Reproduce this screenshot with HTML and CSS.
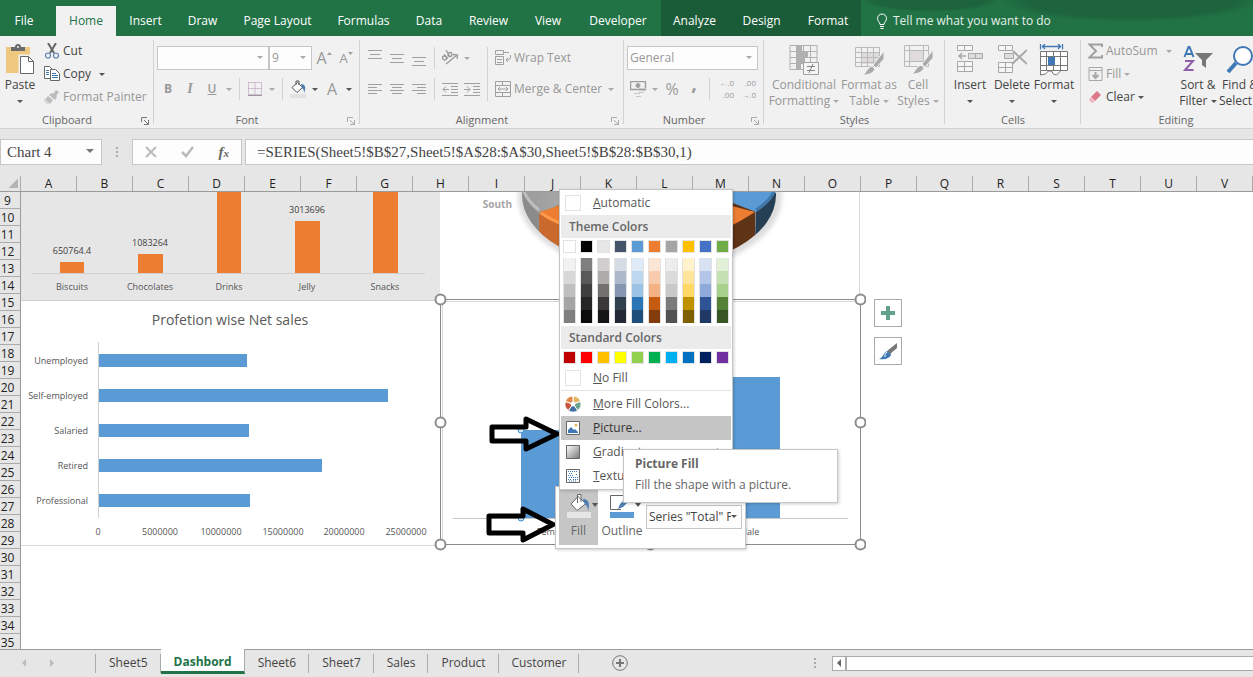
FILE: index.html
```html
<!DOCTYPE html>
<html lang="en">
<head>
<meta charset="utf-8">
<title>Dashbord - Excel</title>
<link rel="stylesheet" href="styles.css">
</head>
<body>
<div class="app">
<nav class="tabs" aria-label="Ribbon tabs">
  <button class="file">File</button><button class="active">Home</button><button>Insert</button><button>Draw</button><button>Page Layout</button><button>Formulas</button><button>Data</button><button>Review</button><button>View</button><button>Developer</button><button class="ctx">Analyze</button><button class="ctx">Design</button><button class="ctx">Format</button>
  <button class="tell"><svg width="12" height="17" viewBox="0 0 12 17" fill="none" stroke="#fff"><path d="M4 11.500C4 9 1.500 8.500 1.500 5.500a4.500 4.500 0 0 1 9 0C10.500 8.500 8 9 8 11.500zM4 13.500h4M4.500 15.500h3"/></svg>Tell me what you want to do</button>
</nav>

<div class="ribbon">
  <section class="group clipboard">
    <div class="tools">
      <button class="big"><svg width="30" height="32" viewBox="0 0 30 32"><path fill="#edc87e" d="M1 3h24v26H1z"/><path fill="#6a6a6a" d="M6 7V3h4a3 3 0 0 1 6 0h4v4z"/><circle cx="13" cy="3" r="1" fill="#f1f1f1"/><path fill="#fff" stroke="#f1f1f1" stroke-width="3" d="M15 12h9l5 5v13H15z"/><path fill="#fff" stroke="#666" d="M15.500 12.500h8l5 5v12h-13zM23.500 12.500v5h5"/></svg><span>Paste</span><i class="caret"></i></button>
      <div class="stack">
        <button><svg width="16" height="16" viewBox="0 0 16 16" fill="none"><path stroke="#666" stroke-width="2" d="M4 0l6 10M12 0L6 10"/><circle cx="4" cy="12.500" r="2.500" stroke="#5b83b3" stroke-width="1.200"/><circle cx="12" cy="12.500" r="2.500" stroke="#5b83b3" stroke-width="1.200"/></svg>Cut</button>
        <button><svg width="16" height="16" viewBox="0 0 16 16" fill="#fff" stroke="#666"><path d="M.5.500h5l3 3v9h-8z"/><path stroke="#4479ae" d="M2 4.500h3M2 6.500h3M2 8.500h3"/><path d="M6.500 3.500h5l4 4v7h-9z"/><path stroke="#4479ae" d="M8 7.500h4M8 9.500h6M8 11.500h6"/></svg>Copy<i class="caret gap"></i></button>
        <button disabled><svg width="16" height="16" viewBox="0 0 16 16" fill="#bdbdbd"><path d="M12 1l3 2-3 4 1 1-2 3-6-5 3-2 1 1zM4 7l5 4-3 4-5-4z"/><path fill="#d9d9d9" d="M0 9l5 5-1 2-4-4z"/></svg>Format Painter</button>
      </div>
    </div>
    <footer>Clipboard<button class="launch" aria-label="Clipboard options"><svg width="8" height="8" viewBox="0 0 8 8" fill="none" stroke="#777"><path d="M.5 5V.5H6M3 3l4 4M7.500 3v4.500H3"/></svg></button></footer>
  </section>

  <section class="group font">
    <div class="tools rows">
      <div class="row">
        <span class="combo face"><select disabled aria-label="Font"><option></option></select></span><span class="combo size"><select disabled aria-label="Font size"><option>9</option></select></span>
        <button class="cell" disabled aria-label="Increase font size"><span class="l16">A</span><svg width="5" height="12" viewBox="0 0 5 12"><path fill="#a0a0a0" d="M0 3l2.500-3L5 3z"/></svg></button><button class="cell" disabled aria-label="Decrease font size"><span class="l13">A</span><svg width="5" height="12" viewBox="0 0 5 12"><path fill="#a0a0a0" d="M0 0h5L2.500 3z"/></svg></button>
      </div>
      <div class="row">
        <button class="cell" disabled><b>B</b></button><button class="cell" disabled><em class="italic">I</em></button><button class="cell" disabled><u class="under">U</u></button><i class="caret off"></i><i class="vr"></i>
        <button class="cell" disabled aria-label="Borders"><svg width="14" height="14" viewBox="0 0 14 14" fill="none" stroke="#b58fb8" stroke-dasharray="1 1"><path d="M.5.5h13v12H.5zM7 .5v12M.5 6.500h13"/><path stroke="#999" stroke-dasharray="none" d="M0 13.500h14"/></svg></button><i class="caret off"></i><i class="vr"></i>
        <button class="cell" aria-label="Fill color"><svg width="17" height="18" viewBox="0 0 17 18"><path fill="#e2e2e2" d="M0 14h16v4H0z"/><path fill="#fff" stroke="#555" d="M7.500 2.500l5 5-5.500 5-5-5zM6 5V1h3v4"/><path fill="#4d7cae" d="M11 4c5 0 5 5 3 9 0-4-1-4-2-5z"/></svg></button><i class="caret"></i>
        <button class="cell" disabled aria-label="Font color"><span class="l16">A</span></button><i class="caret"></i>
      </div>
    </div>
    <footer>Font<button class="launch off" aria-label="Font options"><svg width="8" height="8" viewBox="0 0 8 8" fill="none" stroke="#aaa"><path d="M.5 5V.5H6M3 3l4 4M7.500 3v4.500H3"/></svg></button></footer>
  </section>

  <section class="group align">
    <div class="tools">
      <div class="rows">
        <div class="row">
          <button class="cell" disabled aria-label="Top align"><svg class="ln" width="14" height="16"><path d="M0 .5h14M2 4.500h10M0 8.500h14"/></svg></button><button class="cell" disabled aria-label="Middle align"><svg class="ln" width="14" height="16"><path d="M0 4.500h14M2 8.500h10M0 12.500h14"/></svg></button><button class="cell" disabled aria-label="Bottom align"><svg class="ln" width="14" height="16"><path d="M0 7.500h14M2 11.500h10M0 15.500h14"/></svg></button><i class="vr"></i>
          <button class="cell" disabled aria-label="Orientation"><svg width="18" height="16" viewBox="0 0 18 16" fill="none" stroke="#999" stroke-width="1.300"><path d="M5 14L16 5M12 4.500l4.500.5-.5 4"/><circle cx="3.500" cy="8" r="2"/><path d="M3 4.500l4 4"/><circle cx="9" cy="4.500" r="2"/><path d="M5 0l3.500 6"/></svg></button><i class="caret off"></i>
        </div>
        <div class="row">
          <button class="cell" disabled aria-label="Align left"><svg class="ln" width="14" height="11"><path d="M0 .5h14M0 3.500h9M0 6.500h14M0 9.500h9"/></svg></button><button class="cell" disabled aria-label="Center"><svg class="ln" width="14" height="11"><path d="M0 .5h14M2 3.500h10M0 6.500h14M2 9.500h10"/></svg></button><button class="cell" disabled aria-label="Align right"><svg class="ln" width="14" height="11"><path d="M0 .5h14M5 3.500h9M0 6.500h14M5 9.500h9"/></svg></button><i class="vr"></i>
          <button class="cell" disabled aria-label="Decrease indent"><svg class="ln" width="16" height="13"><path d="M0 .5h16M9 3.500h7M9 6.500h7M9 9.500h7M0 12.500h16M1 6.500h6M4 3.500l-3 3 3 3"/></svg></button><button class="cell" disabled aria-label="Increase indent"><svg class="ln" width="16" height="13"><path d="M0 .5h16M9 3.500h7M9 6.500h7M9 9.500h7M0 12.500h16M0 6.500h6M3 3.500l3 3-3 3"/></svg></button>
        </div>
      </div>
      <i class="vr tall"></i>
      <div class="rows">
        <button class="row wide" disabled><svg class="ln" width="16" height="16"><path d="M.5.5h8v4h-8zM9 2.500h5M.5 6.500h8v8h-8zM2 9.500h5M2 12.500h5M15.500 5v3q0 2-4 2M13 7.500l-2 2.500 2 2"/></svg>Wrap Text</button>
        <button class="row wide" disabled><svg class="ln" width="16" height="16"><path d="M.5.500h15v15H.500zM0 4.500h16M0 11.500h16M7.500 0v4M7.500 12v4M3 8h10M5 6L3 8l2 2M11 6l2 2-2 2"/></svg>Merge &amp; Center<i class="caret off gap"></i></button>
      </div>
    </div>
    <footer>Alignment<button class="launch off" aria-label="Alignment options"><svg width="8" height="8" viewBox="0 0 8 8" fill="none" stroke="#aaa"><path d="M.5 5V.5H6M3 3l4 4M7.500 3v4.500H3"/></svg></button></footer>
  </section>

  <section class="group number">
    <div class="tools rows">
      <div class="row"><span class="combo format"><select disabled aria-label="Number format"><option>General</option></select></span></div>
      <div class="row">
        <button class="cell" disabled aria-label="Accounting format"><svg width="17" height="16" viewBox="0 0 17 16" fill="none" stroke="#a0a0a0"><path d="M.5.5h15v8H.5z" stroke-width="1.500"/><circle cx="8" cy="4.500" r="2" fill="#a0a0a0"/><path stroke="#c8c8c8" d="M9 7.500h7M9 9.500h7M9 11.500h5M4 12.500h6M6 15.500h5"/></svg></button><i class="caret off"></i>
        <button class="cell l16" disabled>%</button><button class="cell comma" disabled>,</button><i class="vr"></i>
        <button class="cell dec" disabled><span>←.0</span><span>.00</span></button><button class="cell dec" disabled><span>.00</span><span>→.0</span></button>
      </div>
    </div>
    <footer>Number<button class="launch off" aria-label="Number options"><svg width="8" height="8" viewBox="0 0 8 8" fill="none" stroke="#aaa"><path d="M.5 5V.5H6M3 3l4 4M7.500 3v4.500H3"/></svg></button></footer>
  </section>

  <section class="group styles">
    <div class="tools">
      <button class="big" disabled><svg width="30" height="32" viewBox="0 0 30 32" fill="none" stroke="#aaa"><path d="M1 1.500h27v24H1zM1 7.500h27M1 13.500h27M1 19.500h27M7.500 1v24M14.500 1v24M21.500 1v24"/><path fill="#aaa" stroke="none" d="M8 2h5v5H8zM8 8h11v5H8zM8 14h8v5H8zM8 20h4v5H8z"/><path fill="#f6f6f6" stroke="#999" d="M14.500 18.500h15v12h-15z"/><path stroke="#777" d="M18 22.500h8M18 26.500h8M24 20l-4 9"/></svg><span>Conditional<br>Formatting <i class="caret off"></i></span></button>
      <button class="big" disabled><svg width="30" height="32" viewBox="0 0 30 32" fill="none" stroke="#b5b5b5"><path fill="#dcd8dc" stroke="none" d="M8 9h17v11H8z"/><path d="M1.500 3.500h24v19h-24zM1 8.500h25M1 13.500h25M1 18.500h25M7.500 3v20M13.500 3v20M19.500 3v20"/><path fill="#a3a3a3" stroke="#f1f1f1" d="M30 7v8l-8 9-3-3zM18 22l3 3c-2 5-8 6-12 6 3-2 4-7 9-9z"/></svg><span>Format as<br>Table <i class="caret off"></i></span></button>
      <button class="big" disabled><svg width="30" height="32" viewBox="0 0 30 32" fill="none" stroke="#b5b5b5"><path fill="#dcd8dc" stroke="none" d="M6 7h15v10H6z"/><path d="M1.500 1.500h24v21h-24zM1 6.500h25M1 17.500h25M6.500 1v22M20.500 1v22"/><path fill="#a3a3a3" stroke="#f1f1f1" d="M30 6v8l-8 9-3-3zM18 21l3 3c-2 5-8 6-12 6 3-2 4-7 9-9z"/></svg><span>Cell<br>Styles <i class="caret off"></i></span></button>
    </div>
    <footer>Styles</footer>
  </section>

  <section class="group cells">
    <div class="tools">
      <button class="big"><svg width="30" height="32" viewBox="0 0 30 32" fill="#f6f6f6" stroke="#a8a8a8"><path d="M2.500 1.500h15v5h-15zM9.500 1.500v5M2.500 17.500h15v10h-15zM2.500 22.500h15M9.500 17.500v10"/><path fill="#ddd" d="M13.500 9.500h14v5h-14zM20.500 9.500v5"/><path fill="none" stroke-width="1.500" d="M4 12h7M7 9l-3 3 3 3"/></svg><span>Insert</span><i class="caret"></i></button>
      <button class="big"><svg width="30" height="32" viewBox="0 0 30 32" fill="#f6f6f6" stroke="#a8a8a8"><path d="M1.500 1.500h14v5h-14zM8.500 1.500v5M1.500 18.500h14v10h-14zM1.500 23.500h14M8.500 18.500v10"/><path fill="#ddd" d="M7.500 9.500h9v5h-9z"/><path stroke-width="2" d="M16 7l14 13M30 6L15 20"/></svg><span>Delete</span><i class="caret"></i></button>
      <button class="big"><svg width="30" height="32" viewBox="0 0 30 32" fill="#fff" stroke="#777"><path d="M1.500 7.500h27v19h-27zM1 12.500h28M1 21.500h28M7.500 7v19M21.500 7v19M14.500 7v5M14.500 22v5"/><path d="M1.500 27v4l5-1 3-3h3l2 3 3 1 4-4"/><path fill="#3f78b5" stroke="none" d="M9 13h7v8H9z"/><path fill="none" stroke="#3f78b5" stroke-width="1.300" d="M1.500 0v5.500M23.500 0v5.500M3 2.500h19M6 0L3.500 2.500 6 5M19 0l2.500 2.500L19 5"/></svg><span>Format</span><i class="caret"></i></button>
    </div>
    <footer>Cells</footer>
  </section>

  <section class="group editing">
    <div class="tools">
      <div class="stack">
        <button disabled><svg width="15" height="16" viewBox="0 0 15 16" fill="none" stroke="#a0a0a0" stroke-width="2"><path d="M14 4V1.500H1.500L8 8l-6.500 6.500H14V12"/></svg>AutoSum<i class="caret off gap"></i></button>
        <button disabled><svg width="15" height="16" viewBox="0 0 15 16" fill="none" stroke="#a8a8a8"><path d="M1 1.500h13v13H1zM1 4.500h13"/><path stroke-width="2" d="M7.500 6v6M4.500 9l3 3 3-3"/></svg>Fill<i class="caret off"></i></button>
        <button><svg width="15" height="16" viewBox="0 0 15 16"><path fill="#e0788b" d="M9 2l4 4-6 6-4-4z"/><path fill="#efb4bd" d="M2.500 8.500l4 4L4 14l-3-3z"/></svg>Clear<i class="caret"></i></button>
      </div>
      <button class="big sort"><svg width="30" height="32" viewBox="0 0 30 32" fill="none"><path stroke="#3f78b5" stroke-width="2" d="M1.500 13L5.500 3h1l4 10M3 10h6"/><path stroke="#8e5fa8" stroke-width="2" d="M2 17h8L2 26h8.500"/><path fill="#777" d="M12 9h18l-7 7v8l-4-3v-5z"/></svg><span>Sort &amp;<br>Filter <i class="caret"></i></span></button>
      <button class="big"><svg width="30" height="32" viewBox="0 0 30 32" fill="none" stroke="#3f78b5"><circle cx="18" cy="12" r="9" fill="#fff" stroke-width="2"/><path stroke-width="4" d="M11 19L3 28"/></svg><span>Find &amp;<br>Select <i class="caret"></i></span></button>
    </div>
    <footer>Editing</footer>
  </section>
</div>

<div class="formula-bar">
  <span class="combo name"><input value="Chart 4" aria-label="Name box"></span>
  <i class="dots"></i>
  <div class="fx"><button disabled aria-label="Cancel"><svg width="12" height="12" viewBox="0 0 12 12"><path fill="none" stroke="#bbb" stroke-width="2" d="M1 1l10 10M11 1L1 11"/></svg></button><button disabled aria-label="Enter"><svg width="13" height="12" viewBox="0 0 13 12"><path fill="none" stroke="#bbb" stroke-width="2.500" d="M1 6l4 4 7-9"/></svg></button><button aria-label="Insert function"><em>f<small>x</small></em></button></div>
  <input class="formula" aria-label="Formula" value="=SERIES(Sheet5!$B$27,Sheet5!$A$28:$A$30,Sheet5!$B$28:$B$30,1)">
</div>

<main class="sheet">
  <div class="cols" id="cols"><span class="corner"></span></div>
  <div class="body">
    <div class="rownums" id="rows"></div>
    <div class="canvas">
      <svg class="chart c1" width="419" height="110" viewBox="0 0 419 110">
        <rect width="419" height="109" fill="#e7e6e6"/><path d="M0 108.500h419" stroke="#d0d0d0"/>
        <path d="M11 81.500h393" stroke="#d0d0d0"/>
        <path fill="#ed7d31" d="M39 70h24v11H39zM117 62h25v19h-25zM196 0h24v81h-24zM274 29h25v52h-25zM352 0h25v81h-25z"/>
        <g class="val"><text x="51" y="62">650764.4</text><text x="129" y="54">1083264</text><text x="286" y="21">3013696</text></g>
        <g class="lab"><text x="51" y="98">Biscuits</text><text x="129" y="98">Chocolates</text><text x="208" y="98">Drinks</text><text x="286" y="98">Jelly</text><text x="364" y="98">Snacks</text></g>
      </svg>
      <svg class="chart c2" width="421" height="108" viewBox="0 0 421 108">
        <defs><clipPath id="disc"><ellipse cx="209" cy="3" rx="127" ry="73"/></clipPath>
        <linearGradient id="face"><stop stop-color="#9a9a9a"/><stop offset="1" stop-color="#b0b0b0"/></linearGradient>
        <filter id="soft"><feGaussianBlur stdDeviation="2"/></filter></defs>
        <ellipse cx="210" cy="5" rx="132" ry="76" fill="#dddddd" filter="url(#soft)"/>
        <g clip-path="url(#disc)">
          <path fill="#8b8b8b" d="M80 0h40v80H80z"/><path fill="#c9692b" d="M99 19l80-30v100h-79z"/><path fill="#5f3315" d="M209 0h107l-2 80H209z"/><path fill="#263f55" d="M316 17l24-20v80h-26z"/>
        </g>
        <path fill="url(#face)" d="M82 0h64l-46 22Q87 12 82 0z"/><path fill="none" stroke="#bebebe" stroke-width="3" d="M84 0q5 10 15 18"/>
        <path fill="#ed7d31" d="M99 20l40-12h130l46 12q-107 70-216 0z"/><path fill="none" stroke="#ff9a4a" stroke-width="3" d="M101 21q10 7 24 12"/>
        <path fill="#5b9bd5" d="M270-2h66q-4 12-20 22l-36-14z"/><path fill="none" stroke="#3f76a8" stroke-width="3" d="M334 0q-6 11-18 18"/>
        <text class="south" x="72" y="16">South</text><path d="M419.500 0v108" stroke="#d9d9d9"/>
      </svg>
      <svg class="chart c3" width="420" height="246" viewBox="0 0 420 246">
        <path d="M0 244.500h420" stroke="#d9d9d9"/>
        <text class="title" x="209" y="24">Profetion wise Net sales</text>
        <path d="M77.500 41v176" stroke="#d0d0d0"/>
        <path fill="#5b9bd5" d="M78 53h148v13H78zM78 88h289v13H78zM78 123h150v13H78zM78 158h223v13H78zM78 193h151v13H78z"/>
        <g class="lab end"><text x="67" y="63">Unemployed</text><text x="67" y="98">Self-employed</text><text x="67" y="133">Salaried</text><text x="67" y="168">Retired</text><text x="67" y="203">Professional</text></g>
        <g class="lab num"><text x="77" y="234">0</text><text x="139" y="234">5000000</text><text x="200" y="234">10000000</text><text x="262" y="234">15000000</text><text x="323" y="234">20000000</text><text x="385" y="234">25000000</text></g>
      </svg>
      <svg class="chart c4" width="432" height="258" viewBox="0 0 432 258" fill="none">
        <rect x="6.500" y="6.500" width="420" height="245" stroke="#8c8c8c" fill="#fff"/><path d="M7 8.500h419M8.500 7v244" stroke="#d9d9d9"/>
        <path fill="#5b9bd5" d="M87 137h62v88H87zM285 84h61v141h-61z"/><path d="M19 225.500h395" stroke="#c8c8c8"/>
        <g class="lab"><text x="118" y="242">Female</text><text x="315" y="242">Male</text></g>
        <g fill="#cfe6f8" stroke="#3b8ccb"><circle cx="87" cy="137" r="3"/><circle cx="87" cy="225" r="3"/></g>
        <g fill="#fff" stroke="#8c8c8c" stroke-width="2"><circle cx="6.500" cy="6.500" r="5"/><circle cx="426.500" cy="6.500" r="5"/><circle cx="6.500" cy="129.500" r="5"/><circle cx="426.500" cy="129.500" r="5"/><circle cx="6.500" cy="251.500" r="5"/><circle cx="426.500" cy="251.500" r="5"/><circle cx="216.500" cy="251.500" r="5"/></g>
        <g stroke="#000" stroke-width="5" stroke-linejoin="round"><path d="M58 134h34v-8l31 15-31 15v-8H58zM55 223h34v-7l30 15.500L89 247v-7H55z"/></g>
      </svg>
      <div class="side">
        <button aria-label="Chart elements"><svg width="14" height="14"><path fill="#62a18e" d="M5 0h4v5h5v4H9v5H5V9H0V5h5z"/></svg></button>
        <button aria-label="Chart styles"><svg width="20" height="20" viewBox="0 0 20 20"><path fill="#777" d="M19 2v5l-7 6-3-3z"/><path fill="#3f78b5" d="M9 10l4 3c0 4-6 6-12 5 4-1 4-6 8-8z"/><path fill="none" stroke="#fff" d="M9 11q-3 2-2 5"/></svg></button>
      </div>
      <div class="minibar">
        <button class="fill"><svg width="32" height="26" viewBox="0 0 32 26"><path fill="#e6e6e6" d="M1 19h24v6H1z"/><path fill="#fff" stroke="#666" d="M12 3.500l8 7-9 7-6-6.500zM11.500 10V1.500H15V9"/><path fill="#4d7cae" d="M17 6c6 0 7 5 5 12 0-5-2-6-4-8z"/><path fill="#555" d="M26 10h6l-3 4z"/></svg>Fill</button>
        <button><svg width="32" height="26" viewBox="0 0 32 26"><path fill="#5b9bd5" d="M1 19h24v6H1z"/><path fill="#fff" stroke="#666" d="M12 16.500H1.500v-14h16V8"/><path fill="#4d7cae" d="M9 16l2-5 8-8 3 3-8 8z"/><path fill="#555" d="M26 10h6l-3 4z"/></svg>Outline</button>
        <span class="combo series"><select aria-label="Chart element"><option>Series "Total" P</option></select></span>
      </div>
      <div class="menu" role="menu">
        <button class="item"><i class="blank"></i><span><u>A</u>utomatic</span></button>
        <h3>Theme Colors</h3>
        <div class="swatches" id="theme"></div>
        <div class="swatches ramps" id="ramps"></div>
        <h3>Standard Colors</h3>
        <div class="swatches standard" id="standard"></div>
        <button class="item"><i class="blank"></i><span><u>N</u>o Fill</span></button>
        <hr>
        <button class="item"><svg width="16" height="16" viewBox="0 0 16 16" stroke="#fff"><path fill="#e3b565" d="M8 8V0a8 8 0 0 1 7.600 5.500z"/><path fill="#6da58f" d="M8 8l7.600-2.500a8 8 0 0 1-2.900 9z"/><path fill="#3f6fa5" d="M8 8l4.700 6.500a8 8 0 0 1-9.400 0z"/><path fill="#c8543c" d="M8 8l-4.700 6.500a8 8 0 0 1-2.900-9z"/><path fill="#e08a4a" d="M8 8L.4 5.500A8 8 0 0 1 8 0z"/><circle cx="8" cy="8" r="2" fill="#fff"/></svg><span><u>M</u>ore Fill Colors...</span></button>
        <button class="item hot"><svg width="14" height="14" viewBox="0 0 14 14"><path fill="#fff" stroke="#666" d="M.5.5h13v13H.5z"/><path fill="#3f78b5" d="M2 12V9l3-3 3 3 1-1 3 3v1z"/><circle cx="10" cy="4" r="1.500" fill="#e3b565"/></svg><span><u>P</u>icture...</span></button>
        <button class="item"><svg width="14" height="14" viewBox="0 0 14 14"><defs><linearGradient id="gr" x2="1" y2="1"><stop stop-color="#fff"/><stop offset="1" stop-color="#777"/></linearGradient></defs><path fill="url(#gr)" stroke="#666" d="M.5.5h13v13H.5z"/></svg><span><u>G</u>radient</span><b class="sub"></b></button>
        <button class="item"><svg width="14" height="14" viewBox="0 0 14 14"><path fill="#fff" stroke="#666" d="M.5.5h13v13H.5z"/><path stroke="#3f78b5" stroke-dasharray="1 1" d="M2 2.500h10M3 4.500h4M2 6.500h5M3 8.500h9M2 10.500h3M7 10.500h5M3 12h8M10 5.500h2"/></svg><span><u>T</u>exture</span><b class="sub"></b></button>
      </div>
      <div class="tip" role="tooltip"><strong>Picture Fill</strong><p>Fill the shape with a picture.</p></div>
    </div>
  </div>
</main>

<div class="sheetbar">
  <div class="nav"><button class="prev" aria-label="Previous sheet"></button><button class="next" aria-label="Next sheet"></button></div>
  <button class="tab">Sheet5</button><button class="tab on">Dashbord</button><button class="tab">Sheet6</button><button class="tab">Sheet7</button><button class="tab">Sales</button><button class="tab">Product</button><button class="tab">Customer</button>
  <button class="add" aria-label="New sheet"><svg width="16" height="16" viewBox="0 0 16 16" fill="none" stroke="#777"><circle cx="8" cy="8" r="7.300"/><path stroke-width="2" d="M8 4v8M4 8h8"/></svg></button>
  <i class="dots"></i>
  <div class="scroll"><button class="prev" aria-label="Scroll left"></button></div>
</div>
</div>
<script src="script.js"></script>
</body>
</html>
```

FILE: styles.css
```css
* { box-sizing: border-box; }
body { margin: 0; font: 12px/16px "Open Sans", "Noto Sans", sans-serif; color: #444; background: #fff; }
button { font: inherit; color: inherit; background: none; border: 0; padding: 0; margin: 0; white-space: nowrap; }
button:disabled { color: #979797; }
svg { display: block; flex: none; }
.app { height: 100vh; display: flex; flex-direction: column; overflow: hidden; }

.tabs { flex: none; height: 36px; display: grid; align-items: end; color: #fff; overflow: hidden;
  grid-template-columns: 56px 60px 59px 55px 95px 77px 54px 65px 54px 86px 67px 67px 66px 1fr;
  background: radial-gradient(ellipse 70px 12px at 930px 0, #1d643c 80%, transparent), radial-gradient(ellipse 130px 22px at 1130px 0, #1d643c 80%, transparent), #217346; }
.tabs button { height: 30px; }
.tabs .file { padding-right: 8px; }
.tabs .active { background: #f1f1f1; color: #217346; }
.tabs .ctx { height: 36px; padding-top: 6px; background: #1b5c38; }
.tabs .tell { display: flex; align-items: center; gap: 5px; padding-left: 15px; color: #e3f0e8; }

.ribbon { flex: none; height: 93px; display: flex; background: #f1f1f1; border-bottom: 1px solid #d2d2d2; overflow: hidden; }
.group { position: relative; flex: none; display: flex; flex-direction: column; padding-top: 4px; }
.group::after { content: ""; position: absolute; right: 0; top: 4px; height: 84px; border-right: 1px solid #d2d2d2; }
.group footer { display: flex; justify-content: center; align-items: center; height: 16px; color: #666; font-size: 11px; padding-right: 20px; }
.launch { position: absolute; right: 5px; bottom: 3px; }
.tools { height: 72px; display: flex; }
.clipboard { width: 154px; }
.font { width: 206px; }
.align { width: 264px; }
.number { width: 140px; }
.styles { width: 181px; }
.cells { width: 136px; }
.editing { width: 190px; }
.cells footer, .styles footer, .editing footer { padding-right: 0; }

.big { display: flex; flex-direction: column; align-items: center; padding-top: 4px; gap: 1px; width: 50px; flex: none; line-height: 16px; }
.big:disabled svg { opacity: 0.9; }
.big .caret { margin-top: 6px; }
.big span .caret { margin-top: 0; }
.clipboard .big { width: 40px; }
.styles .big:first-child { width: 80px; }
.styles .big:last-child { width: 48px; }
.cells .big { width: 42px; }
.cells .tools { padding-left: 4px; }
.stack { display: flex; flex-direction: column; gap: 3px; padding: 1px 0 0 4px; }
.stack button { display: flex; align-items: center; gap: 3px; height: 20px; }
.caret { display: inline-block; flex: none; border: 3px solid transparent; border-top-color: #555; border-bottom: 0; vertical-align: middle; }
.caret.off { border-top-color: #aaa; }
.caret.gap { margin-left: 5px; }
.row .caret { margin: 0 3px; }
.rows { display: flex; flex-direction: column; gap: 7px; padding-top: 6px; }
.row { display: flex; align-items: center; height: 24px; }
.font .rows, .number .rows { padding-left: 3px; }
.align .tools { padding-left: 4px; }
.cell { width: 22px; height: 24px; display: flex; align-items: center; justify-content: center; flex: none; }
.cell:disabled { color: #999; }
.italic { font-family: "Liberation Serif", serif; font-size: 14px; font-weight: 700; }
.under { font-weight: 600; }
.vr { width: 1px; height: 22px; background: #d2d2d2; margin: 0 4px; flex: none; }
.vr.tall { height: 54px; margin-top: 7px; }
.wide { gap: 3px; padding-left: 3px; }
.l16 { font-size: 16px; }
.l13 { font-size: 13px; }
.comma { font-size: 20px; font-weight: 700; padding-bottom: 12px; }
.dec { flex-direction: column; font-size: 8px; line-height: 12px; align-items: flex-end; padding-right: 2px; }
.ln { fill: none; stroke: #a0a0a0; }
.editing .stack { width: 96px; padding-left: 7px; }
.editing .big { width: 42px; }

.combo { position: relative; display: block; height: 24px; background: #fdfdfd; border: 1px solid #c6c6c6; flex: none; }
.combo::after { content: ""; position: absolute; right: 5px; top: 9px; border: 3px solid transparent; border-top-color: #aaa; border-bottom: 0; pointer-events: none; }
.combo select, .combo input { appearance: none; width: 100%; height: 100%; border: 0; background: none; font: inherit; color: #444; padding: 0 2px; outline: 0; opacity: 1; }
.combo select:disabled { color: #999; }
.face { width: 112px; }
.size { width: 43px; margin-right: 1px; }
.format { width: 131px; }

.formula-bar { flex: none; height: 47px; display: flex; align-items: flex-start; padding-top: 10px; background: #e6e6e6; font: 15px/24px "Liberation Serif", serif; }
.name { width: 102px; height: 26px; }
.name::after { border-width: 4px; border-bottom: 0; border-top-color: #777; right: 7px; }
.combo.name input { padding-left: 6px; }
.dots { width: 2px; height: 11px; margin: 8px 14px 0; background: repeating-linear-gradient(#aaa 0 2px, transparent 2px 4px); flex: none; }
.fx { display: flex; width: 110px; height: 26px; background: #fdfdfd; border: 1px solid #c6c6c6; flex: none; justify-content: space-around; align-items: center; margin-right: 3px; }
.fx em { font-weight: 700; font-size: 15px; color: #666; }
.fx small { font-size: 11px; }
.formula { flex: 1; min-width: 0; height: 26px; border: 1px solid #c6c6c6; border-right: 0; background: #fdfdfd; font: inherit; color: #444; padding: 0 11px; outline: 0; }

.sheet { flex: 1; min-height: 0; display: flex; flex-direction: column; font-size: 12px; color: #222; }
.cols { flex: none; display: flex; height: 16px; background: #e6e6e6; border-bottom: 1px solid #9b9b9b; overflow: hidden; line-height: 16px; }
.cols span { flex: none; width: 56px; border-right: 1px solid #ababab; text-align: center; }
.cols .corner { width: 21px; background: linear-gradient(135deg, transparent 50%, #b5b5b5 50%) 8px 2px / 10px 10px no-repeat; }
.body { flex: 1; min-height: 0; display: flex; }
.rownums { width: 21px; flex: none; background: #e6e6e6; border-right: 1px solid #9b9b9b; overflow: hidden; }
.rownums span { display: block; height: 17px; border-bottom: 1px solid #ababab; text-align: center; line-height: 18px; padding-right: 5px; }
.canvas { flex: 1; position: relative; }
.chart { position: absolute; }
.chart text { fill: #555; text-anchor: middle; font-size: 9px; }
.chart .end text { text-anchor: end; }
.chart .val text { fill: #404040; }
.chart .title { font-size: 14px; fill: #595959; }
.chart .south { font-size: 10px; font-weight: 700; fill: #a5a5a5; text-anchor: end; }
.c1 { left: 0; top: 0; }
.c2 { left: 419px; top: 0; }
.c3 { left: 0; top: 109px; }
.c4 { left: 413px; top: 101px; }
.side { position: absolute; left: 853px; top: 107px; display: flex; flex-direction: column; gap: 10px; }
.side button { width: 28px; height: 28px; background: #fff; border: 1px solid #ababab; display: grid; place-items: center; }

.minibar { position: absolute; left: 534px; top: 294px; width: 191px; display: flex; padding: 3px; background: #fff; border: 1px solid #c6c6c6; box-shadow: 1px 1px 3px #0003; color: #666; }
.minibar button { width: 39px; height: 55px; display: flex; flex-direction: column; align-items: center; gap: 4px; padding-top: 3px; }
.minibar button svg { margin-left: 6px; }
.minibar button + button { width: 48px; }
.minibar .fill { background: #c6c6c6; }
.minibar .series { flex: 1; min-width: 0; margin: 15px 0 0; }
.minibar .series::after { border-top-color: #555; right: 4px; }
.minibar .series select { padding-right: 10px; }

.menu { position: absolute; left: 538px; top: -3px; width: 174px; padding: 1px; background: #fff; border: 1px solid #c6c6c6; box-shadow: 1px 1px 3px #0003; color: #555; }
.item { display: flex; align-items: center; width: 100%; height: 24px; padding: 0 4px; }
.item svg, .blank { width: 16px; margin-right: 12px; flex: none; }
.blank { height: 16px; border: 1px solid #e2e2e2; }
.hot { background: #c5c5c5; color: #333; }
.sub { margin-left: auto; border: 4px solid transparent; border-left-color: #555; border-right: 0; margin-right: 6px; }
.menu h3 { margin: 0; height: 23px; padding-left: 8px; font-size: 12px; line-height: 23px; font-weight: 600; background: #ebebeb; color: #666; }
.menu hr { margin: 0 0 1px; border: 0; border-top: 1px solid #e2e2e2; }
.swatches { display: flex; gap: 4px; padding: 2px 2px 3px; }
.standard { padding-bottom: 2px; }
.swatches button { width: 13px; height: 13px; border: 1px solid #e2e2e2; }
.ramps div { display: flex; flex-direction: column; }
.ramps button { border-width: 0 1px; }

.tip { position: absolute; left: 602px; top: 257px; width: 215px; padding: 6px 11px 9px; background: #fff; border: 1px solid #c6c6c6; box-shadow: 1px 1px 3px #0003; color: #666; white-space: nowrap; }
.tip strong { font-weight: 700; display: block; }
.tip p { margin: 5px 0 0; }

.sheetbar { flex: none; height: 28px; display: flex; align-items: flex-start; background: #e6e6e6; border-top: 1px solid #9b9b9b; }
.nav { width: 96px; height: 19px; display: flex; gap: 24px; border-right: 1px solid #ababab; margin-top: 4px; padding: 5px 0 0 22px; }
.prev, .next { width: 4px; height: 8px; border: 4px solid transparent; border-left: 0; border-right-color: #bbb; }
.next { border-left: 4px solid #bbb; border-right: 0; }
.tab { height: 19px; margin-top: 4px; padding: 0 12px 1px 13px; border-right: 1px solid #ababab; }
.tab.on { height: 25px; margin-top: -1px; background: #fff; color: #217346; font-weight: 700; border-bottom: 3px solid #217346; padding-top: 4px; }
.add { margin: 5px 0 0 33px; }
.sheetbar .dots { margin: 8px 16px 0 auto; }
.scroll { width: 421px; height: 15px; margin-top: 6px; background: #fff; border: 1px solid #ababab; border-right: 0; }
.scroll .prev { display: block; width: 14px; height: 13px; border: 0; border-right: 2px solid #ababab; position: relative; }
.scroll .prev::after { content: ""; position: absolute; left: 4px; top: 2px; border: 4px solid transparent; border-left: 0; border-right-color: #666; }
```

FILE: script.js
```js
const byId = (id) => document.getElementById(id);

function add(parent, tag, text) {
  const node = document.createElement(tag);
  if (text) node.textContent = text;
  parent.appendChild(node);
  return node;
}

function swatch(parent, color) {
  const button = add(parent, "button");
  button.style.background = color;
  button.setAttribute("aria-label", color);
}

for (const letter of "ABCDEFGHIJKLMNOPQRSTUV") add(byId("cols"), "span", letter);
for (let n = 9; n <= 35; n++) add(byId("rows"), "span", String(n));

const theme = ["#ffffff", "#000000", "#e7e6e6", "#44546a", "#5b9bd5", "#ed7d31", "#a5a5a5", "#ffc000", "#4472c4", "#70ad47"];
const standard = ["#c00000", "#ff0000", "#ffc000", "#ffff00", "#92d050", "#00b050", "#00b0f0", "#0070c0", "#002060", "#7030a0"];
const ramps = [
  ["#f2f2f2", "#d8d8d8", "#bfbfbf", "#a5a5a5", "#7f7f7f"],
  ["#7f7f7f", "#595959", "#3f3f3f", "#262626", "#0c0c0c"],
  ["#d0cece", "#aeabab", "#757070", "#3a3838", "#171616"],
  ["#d6dce4", "#adb9ca", "#8496b0", "#323f4f", "#222a35"],
  ["#deebf6", "#bdd7ee", "#9cc3e5", "#2e75b5", "#1e4e79"],
  ["#fbe5d5", "#f7cbac", "#f4b183", "#c55a11", "#833c0b"],
  ["#ededed", "#dbdbdb", "#c9c9c9", "#7b7b7b", "#525252"],
  ["#fff2cc", "#fee599", "#ffd965", "#bf9000", "#7f6000"],
  ["#d9e2f3", "#b4c6e7", "#8eaadb", "#2f5496", "#1f3864"],
  ["#e2efd9", "#c5e0b3", "#a8d08d", "#538135", "#375623"]
];

theme.forEach((color) => swatch(byId("theme"), color));
standard.forEach((color) => swatch(byId("standard"), color));
ramps.forEach((colors) => {
  const column = add(byId("ramps"), "div");
  colors.forEach((color) => swatch(column, color));
});
```
